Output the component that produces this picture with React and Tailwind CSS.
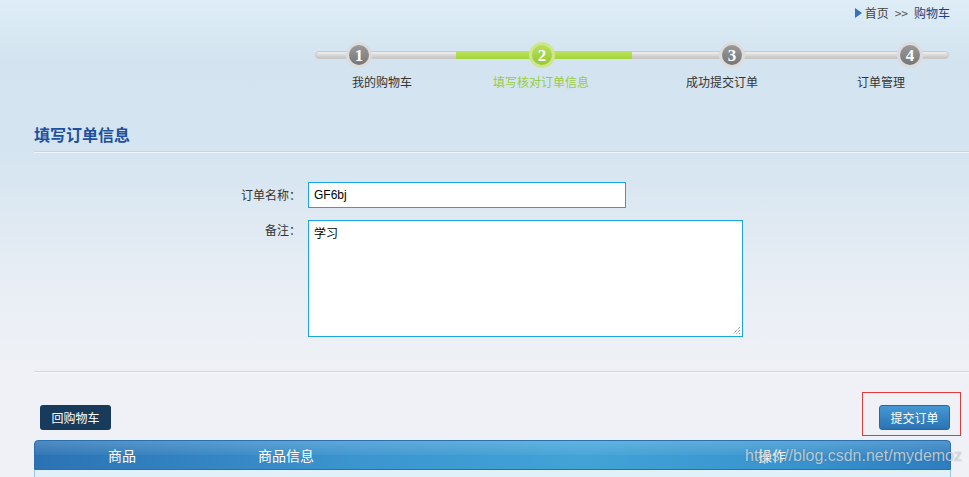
import React from "react";

const cjk = { fontFamily: '"Noto Sans CJK SC", "Liberation Sans", sans-serif' };

function Circle({ n, active, left }) {
  return (
    <div
      className={`absolute top-[2px] w-[26px] h-[26px] rounded-full flex items-center justify-center ${
        active ? "bg-[#cfe68e]" : "bg-[#dcdcdc]"
      }`}
      style={{ left }}
    >
      <div
        className={`w-[20px] h-[20px] rounded-full flex items-center justify-center text-white font-bold text-[17px] leading-none ${
          active
            ? "bg-[linear-gradient(180deg,#b8e05a,#96c932)]"
            : "bg-[linear-gradient(180deg,#9a9a9a,#767676)]"
        }`}
        style={{ fontFamily: '"Liberation Serif", serif' }}
      >
        {n}
      </div>
    </div>
  );
}

export default function App() {
  return (
    <div
      className="relative w-[969px] h-[477px] overflow-hidden bg-[linear-gradient(180deg,#deedf6_0px,#d3e4f0_60px,#d4e4f0_150px,#e9eef5_290px,#eff1f6_380px,#eff1f6_477px)] text-[12px] text-[#333]"
      style={cjk}
    >
      {/* breadcrumb */}
      <div className="h-[24px] flex items-center justify-end pr-[19px] pt-[1px]">
        <span className="w-0 h-0 border-y-[5px] border-y-transparent border-l-[7px] border-l-[#3a70b8] mr-[3px]" />
        <span className="text-[#444]">首页</span>
        <span className="mx-[6px] text-[#555]">&gt;&gt;</span>
        <span className="text-[#1b3f80]">购物车</span>
      </div>

      {/* progress */}
      <div className="relative ml-[315px] mt-[16px] w-[634px] h-[30px]">
        <div className="absolute left-0 right-0 top-[11px] h-[8px] rounded-full bg-[linear-gradient(180deg,#f0f0f0,#d6d6d6_60%,#c4c4c4)] border border-[#c9c9c9]" />
        <div className="absolute left-[141px] w-[176px] top-[11px] h-[8px] bg-[linear-gradient(180deg,#bde35e,#a2d43a)]" />
        <Circle n="1" left={31} />
        <Circle n="2" left={214} active />
        <Circle n="3" left={404} />
        <Circle n="4" left={582} />
      </div>
      <div className="flex ml-[315px] mt-[4px] h-[16px] leading-[16px]">
        <div className="w-[134px] text-center text-[#333]">我的购物车</div>
        <div className="w-[184px] text-center text-[#9acb3c]">填写核对订单信息</div>
        <div className="w-[178px] text-center text-[#333]">成功提交订单</div>
        <div className="w-[140px] text-center text-[#333]">订单管理</div>
      </div>

      {/* title */}
      <div className="ml-[34px] mt-[33px] pb-[6px] border-b border-[#c8d4de] shadow-[0_1px_0_#eef5fa]">
        <div className="text-[16px] leading-[22px] font-semibold text-[#1e4f9f]">填写订单信息</div>
      </div>

      {/* form */}
      <div className="mt-[30px] flex flex-col gap-[12px]">
        <div className="flex items-center">
          <div className="w-[302px] text-right pr-[1px] text-[#333]">订单名称：</div>
          <div className="ml-[6px] w-[318px] h-[26px] bg-white border border-[#1aa6de] flex items-center px-[5px] text-[12px] text-black" style={{ fontFamily: '"Liberation Sans", sans-serif' }}>
            GF6bj
          </div>
        </div>
        <div className="flex items-start">
          <div className="w-[302px] text-right pr-[1px] pt-[1px] text-[#333]">备注：</div>
          <div className="relative ml-[6px] w-[435px] h-[117px] bg-white border border-[#1aa6de] px-[5px] pt-[3px] text-black">
            学习
            <svg className="absolute right-[1px] bottom-[1px]" width="10" height="10" viewBox="0 0 10 10">
              <path d="M9 2 L2 9 M9 5 L5 9 M9 8 L8 9" stroke="#666" strokeWidth="1" strokeDasharray="1 1" />
            </svg>
          </div>
        </div>
      </div>

      {/* divider */}
      <div className="ml-[34px] mt-[34px] border-b border-[#cfd8e1] shadow-[0_1px_0_#f7f9fb]" />

      {/* buttons */}
      <div className="mt-[33px] flex justify-between pl-[40px] pr-[19px]">
        <button className="h-[25px] w-[71px] rounded-[3px] bg-[#183b5b] text-white text-[12px]" style={cjk}>
          回购物车
        </button>
        <button className="h-[25px] w-[71px] rounded-[3px] bg-[linear-gradient(180deg,#4598d3,#2b73b4)] border border-[#2867a2] text-white text-[12px]" style={cjk}>
          提交订单
        </button>
      </div>

      {/* table header */}
      <div className="ml-[34px] mt-[10px] w-[917px]">
        <div className="relative h-[30px] rounded-t-[4px] border border-[#2c6fae] bg-[linear-gradient(90deg,#2b72b4,#3b95cf_35%,#41a3d6_60%,#3792cd_85%,#2d7dbf)] text-white text-[14px] flex items-center">
          <div className="absolute inset-x-0 top-0 h-[14px] rounded-t-[4px] bg-[linear-gradient(180deg,rgba(255,255,255,0.18),rgba(255,255,255,0.04))]" />
          <span className="absolute left-[73px]">商品</span>
          <span className="absolute left-[223px]">商品信息</span>
          <span className="absolute left-[723px]">操作</span>
        </div>
        <div className="h-[20px] bg-[#e1f1fa] border-x border-[#9cc7e3]" />
      </div>

      {/* red annotation box */}
      <div className="absolute left-[862px] top-[392px] w-[99px] h-[44px] border border-[#e53a3a]" />

      {/* watermark */}
      <div
        className="absolute left-[745px] top-[446px] text-[16px] leading-[20px] text-[rgba(235,240,245,0.72)] [text-shadow:0_0_1px_rgba(60,60,60,0.5)]"
        style={{ fontFamily: '"Liberation Sans", Arial, sans-serif' }}
      >
        https://blog.csdn.net/mydemoz
      </div>
    </div>
  );
}
